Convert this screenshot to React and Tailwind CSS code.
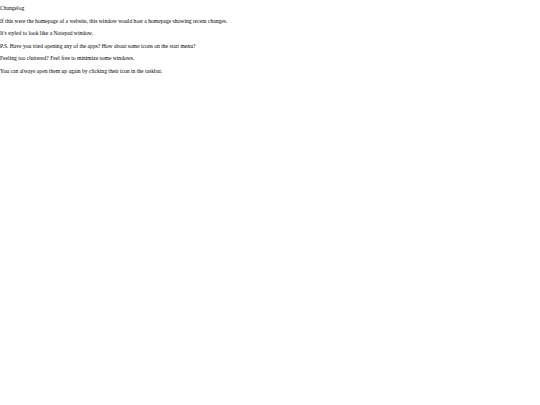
export default function App() {
  const lines = [
    'Changelog',
    'If this were the homepage of a website, this window would host a homepage showing recent changes.',
    "It's styled to look like a Notepad window.",
    'P.S. Have you tried opening any of the apps? How about some icons on the start menu?',
    'Feeling too cluttered? Feel free to minimize some windows.',
    'You can always open them up again by clicking their icon in the taskbar.',
  ];
  return (
    <div className="min-h-screen w-full bg-white text-black font-['Liberation_Serif',serif] text-[5.6px] leading-[7px] pt-[5px]">
      {lines.map((t) => (
        <p key={t} className="mb-[5.6px]">
          {t}
        </p>
      ))}
    </div>
  );
}
